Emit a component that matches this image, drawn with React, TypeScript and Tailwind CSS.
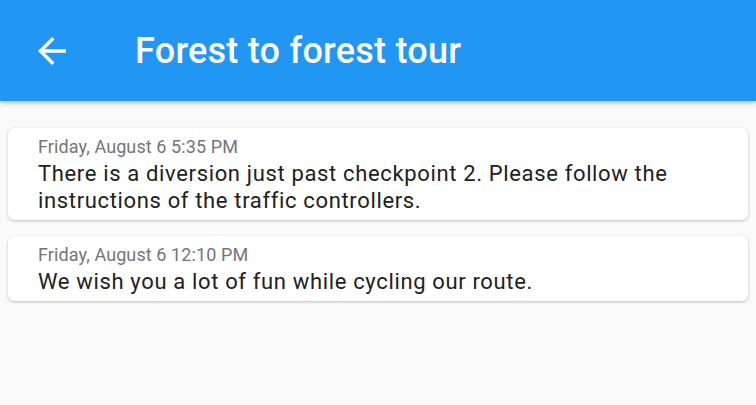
export default function App() {
  const messages = [
    {
      date: 'Friday, August 6 5:35 PM',
      text: 'There is a diversion just past checkpoint 2. Please follow the instructions of the traffic controllers.',
    },
    {
      date: 'Friday, August 6 12:10 PM',
      text: 'We wish you a lot of fun while cycling our route.',
    },
  ];

  return (
    <div className="w-[756px] h-[405px] bg-[#fafafa] overflow-hidden" style={{ fontFamily: 'Roboto, sans-serif' }}>
      {/* App bar */}
      <header className="relative z-10 h-[101px] bg-[#2196f3] flex items-center shadow-[0_2px_5px_rgba(0,0,0,0.25)]">
        <button className="ml-[31px] w-[42px] h-[42px] flex items-center justify-center text-white">
          <svg viewBox="0 0 24 24" width="42" height="42" fill="currentColor">
            <path d="M20 11H7.83l5.59-5.59L12 4l-8 8 8 8 1.41-1.41L7.83 13H20v-2z" />
          </svg>
        </button>
        <h1 className="ml-[62px] text-white text-[36px] font-medium leading-none tracking-[0.25px]">
          Forest to forest tour
        </h1>
      </header>

      {/* Messages */}
      <div className="pt-[27px] flex flex-col gap-4 px-2">
        {messages.map((m) => (
          <div
            key={m.date}
            className="bg-white rounded-md shadow-[0_1px_3px_rgba(0,0,0,0.25)] pl-[30px] pr-4 pt-2 pb-[6px]"
          >
            <div className="text-[18px] leading-[21px] tracking-[0.1px] text-[#757575]">{m.date}</div>
            <div className="mt-[3px] text-[22px] leading-[27px] tracking-[0.65px] text-[#212121]">{m.text}</div>
          </div>
        ))}
      </div>
    </div>
  );
}
